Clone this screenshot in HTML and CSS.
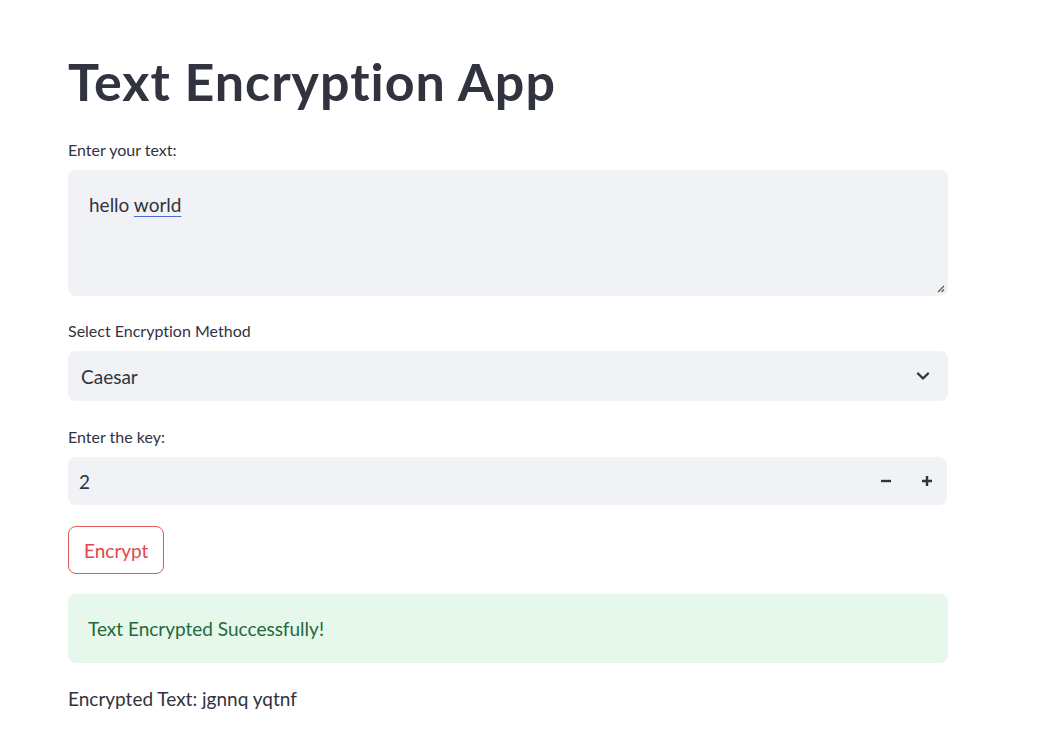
FILE: index.html
```html
<!DOCTYPE html>
<html>
<head>
<meta charset="utf-8">
<link rel="stylesheet" href="styles.css">
</head>
<body>
<main class="page">
  <h1 class="title">Text Encryption App</h1>

  <div class="field">
    <label class="label">Enter your text:</label>
    <div class="textarea">
      <span>hello <span class="spell">world</span></span>
      <svg class="grip" width="8" height="8" viewBox="0 0 8 8"><path d="M7 1L1 7M7 4.5L4.5 7" stroke="#555" stroke-width="1.2" fill="none"/></svg>
    </div>
  </div>

  <div class="field">
    <label class="label">Select Encryption Method</label>
    <div class="select">
      <span>Caesar</span>
      <svg class="chev" width="14" height="10" viewBox="0 0 14 10"><path d="M2 2.5L7 7.5L12 2.5" stroke="#31333f" stroke-width="2.4" fill="none" stroke-linecap="round" stroke-linejoin="round"/></svg>
    </div>
  </div>

  <div class="field key">
    <label class="label">Enter the key:</label>
    <div class="number">
      <span class="num-val">2</span>
      <div class="steps">
        <svg width="12" height="12" viewBox="0 0 12 12"><path d="M1 6H11" stroke="#31333f" stroke-width="2.4"/></svg>
        <svg width="12" height="12" viewBox="0 0 12 12"><path d="M1 6H11M6 1V11" stroke="#31333f" stroke-width="2.4"/></svg>
      </div>
    </div>
  </div>

  <button class="btn">Encrypt</button>

  <div class="success">Text Encrypted Successfully!</div>

  <p class="result">Encrypted Text: jgnnq yqtnf</p>
</main>
</body>
</html>
```

FILE: styles.css
```css
html, body {
  margin: 0;
  padding: 0;
  background: #ffffff;
}
body {
  font-family: "Lato", "Noto Sans", sans-serif;
  color: #31333f;
  font-variant-ligatures: none;
  font-feature-settings: "liga" 0;
}
.page {
  width: 880px;
  margin-left: 68px;
  padding-top: 53px;
  display: flex;
  flex-direction: column;
}
.title {
  margin: 0;
  font-size: 52px;
  font-weight: 700;
  line-height: 56px;
  letter-spacing: 1px;
}
.field {
  display: flex;
  flex-direction: column;
}
.label {
  font-size: 16px;
  line-height: 20px;
  margin-bottom: 10px;
}
.field:first-of-type .label { margin-top: 31px; }
.textarea {
  position: relative;
  height: 126px;
  box-sizing: border-box;
  background: #f0f2f6;
  border-radius: 8px;
  padding: 23px 21px;
  font-size: 19px;
  line-height: 24px;
}
.spell {
  text-decoration: underline;
  text-decoration-color: #4a6bd0;
  text-underline-offset: 4px;
}
.grip {
  position: absolute;
  right: 3px;
  bottom: 3px;
}
.field + .field .label { margin-top: 25px; }
.field.key .label { margin-top: 26px; }
.select {
  height: 50px;
  box-sizing: border-box;
  background: #f0f2f6;
  border-radius: 8px;
  padding: 0 18px 0 13px;
  display: flex;
  align-items: center;
  justify-content: space-between;
  font-size: 19px;
}
.number {
  height: 48px;
  width: 879px;
  box-sizing: border-box;
  background: #f0f2f6;
  border-radius: 8px;
  padding: 0 14px 0 11px;
  display: flex;
  align-items: center;
  justify-content: space-between;
  font-size: 19px;
}
.steps {
  display: flex;
  gap: 29px;
}
.btn {
  align-self: flex-start;
  margin-top: 21px;
  height: 48px;
  padding: 0 15px;
  background: #fff;
  border: 1px solid #e45a5a;
  border-radius: 8px;
  color: #e2474b;
  font-family: inherit;
  font-size: 19px;
  font-variant-ligatures: none;
}
.success {
  margin-top: 20px;
  height: 69px;
  box-sizing: border-box;
  background: #e6f7ec;
  border-radius: 8px;
  padding: 0 20px;
  display: flex;
  align-items: center;
  color: #24693a;
  font-size: 19px;
}
.result {
  margin: 24px 0 0;
  font-size: 19px;
  line-height: 24px;
}
```
